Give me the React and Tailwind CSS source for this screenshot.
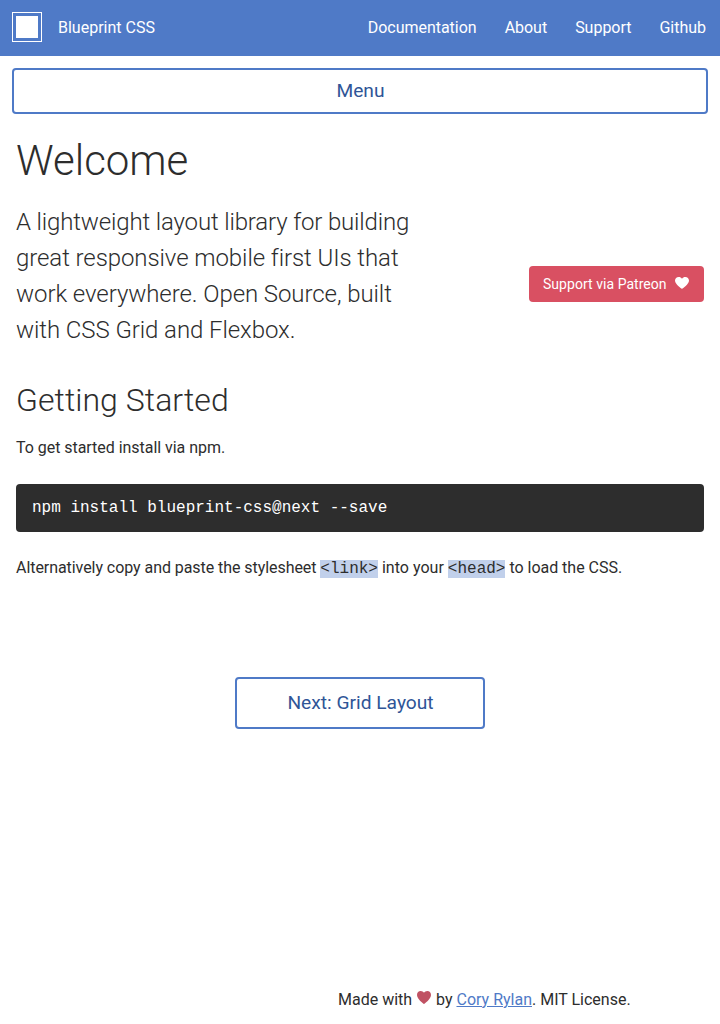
const navLinks = ["Documentation", "About", "Support", "Github"];

function Heart({ className }) {
  return (
    <svg viewBox="0 0 14 12" preserveAspectRatio="none" className={className} fill="currentColor" aria-hidden="true">
      <path d="M7 12C6.4 11.7 0 7.2 0 3.6C0 1.5 1.6 0 3.7 0C5.1 0 6.3 .7 7 1.7C7.7 .7 8.9 0 10.3 0C12.4 0 14 1.5 14 3.6C14 7.2 7.6 11.7 7 12Z" />
    </svg>
  );
}

export default function App() {
  return (
    <div className="flex h-[1024px] flex-col overflow-hidden bg-white font-[Roboto,sans-serif] text-base text-[#2d2d2d]">
      <header className="flex h-14 shrink-0 items-center justify-between bg-[#4f7ac7] pr-3.5 pl-3 text-white">
        <div className="flex items-center gap-4">
          <div className="mb-0.5 size-[30px] border border-white p-[3px]">
            <div className="size-full bg-white" />
          </div>
          <span>Blueprint CSS</span>
        </div>
        <nav className="flex gap-7">
          {navLinks.map((label) => (
            <a key={label} href="#" className="tracking-[-0.02px]">{label}</a>
          ))}
        </nav>
      </header>

      <button className="mx-3 mt-3 h-[46px] shrink-0 rounded border-2 border-[#4f7ac7] pl-px text-[19.2px] text-[#2f5597]">
        Menu
      </button>

      <main className="flex flex-col px-4">
        <h1 className="mt-[19px] text-[42px] leading-[56px] font-light">Welcome</h1>
        <div className="mt-[15px] flex items-center justify-between">
          <p className="w-[400px] text-2xl leading-9 font-light tracking-[-0.08px]">
            <span className="tracking-[-0.15px]">A lightweight layout library for building </span>
            great responsive mobile first UIs that work everywhere. Open Source, built with CSS Grid and Flexbox.
          </p>
          <a href="#" className="mt-4 flex h-9 w-[175px] items-center rounded bg-[#d95062] px-3.5 text-sm tracking-[0.04px] text-white">
            Support via Patreon
            <Heart className="mb-0.5 ml-2 h-3 w-3.5" />
          </a>
        </div>
        <h2 className="mt-8 text-[32px] leading-10 font-light tracking-[0.05px]">Getting Started</h2>
        <p className="mt-4 leading-6 tracking-[-0.04px]">To get started install via npm.</p>
        <pre className="mt-6 h-12 rounded bg-[#2d2d2d] px-4 font-['Liberation_Mono',monospace] leading-[48px] text-white">npm install blueprint-css@next --save</pre>
        <p className="mt-6 leading-6 tracking-[-0.06px]">
          Alternatively copy and paste the stylesheet <code className="bg-[#c1d0eb] font-['Liberation_Mono',monospace] tracking-normal">&lt;link&gt;</code><span className="tracking-[0.02px]"> into your </span><code className="bg-[#c1d0eb] font-['Liberation_Mono',monospace] tracking-normal">&lt;head&gt;</code><span className="tracking-[-0.02px]"> to load the CSS.</span>
        </p>
        <button className="mt-24 h-[52px] w-[250px] self-center rounded border-2 border-[#4f7ac7] pl-px text-[19.2px] text-[#2f5597]">
          Next: Grid Layout
        </button>
      </main>

      <footer className="mt-auto mb-3 ml-[338px] leading-6">
        Made with <Heart className="mr-px mb-1.5 ml-px inline h-[13px] w-3.5 text-[#c05263]" /> by <a href="#" className="text-[#4f7ac7] underline">Cory Rylan</a>. MIT License.
      </footer>
    </div>
  );
}
